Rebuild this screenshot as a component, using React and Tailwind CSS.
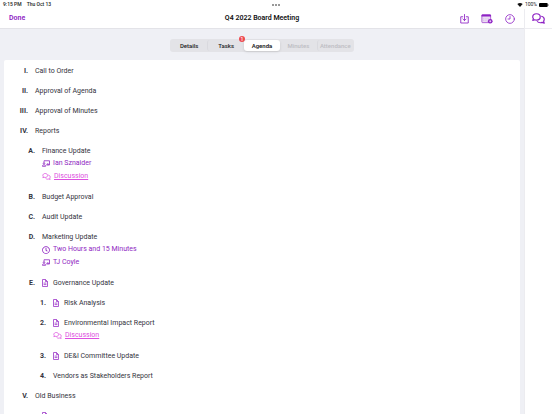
import React from "react";
import { FaRegClock } from "react-icons/fa";

function PresenterIcon({ className }) {
  return (
    <svg viewBox="0 0 20 16" className={className} fill="none" stroke="currentColor" strokeWidth="2" aria-hidden="true">
      <path d="M5 4V1.200h13.800v10.600H11" />
      <path d="M12.500 11.500V9h3.500v2.500" />
      <circle cx="5" cy="7.600" r="2" />
      <path d="M1 15c0-2.600 1.400-3.600 4-3.600s4 1 4 3.600z" />
    </svg>
  );
}

function FileIcon({ className }) {
  return (
    <svg viewBox="0 0 12 16" className={className} fill="none" stroke="currentColor" strokeWidth="1.600" strokeLinejoin="round" aria-hidden="true">
      <path d="M1 1h6l4 4v10H1z" />
      <path d="M7 1v4h4M3.200 8.200h5.600M3.200 11.200h5.600" />
    </svg>
  );
}

function DownloadIcon() {
  return (
    <svg viewBox="0 0 18 20" className="h-[10px] w-[9px]" fill="none" stroke="currentColor" strokeWidth="1.700" strokeLinecap="round" strokeLinejoin="round" aria-hidden="true">
      <path d="M5.500 5.500H1.500v12.500h15V5.500h-4" />
      <path d="M9 1v12M5.800 10l3.200 3.200 3.200-3.200" />
    </svg>
  );
}

function CalendarIcon() {
  return (
    <svg viewBox="0 0 24 20" className="h-[10px] w-3" aria-hidden="true">
      <rect x="1.700" y="1.700" width="17.600" height="15.600" rx="1.500" fill="#eadcf3" stroke="currentColor" strokeWidth="1.300" />
      <path d="M1 2.500A1.500 1.500 0 0 1 2.500 1h16A1.500 1.500 0 0 1 20 2.500V5H1z" fill="currentColor" />
      <path d="M4 9.500h13M4 13h9" stroke="currentColor" strokeWidth="1" strokeDasharray="2 1.500" opacity=".25" />
      <circle cx="18.500" cy="14.500" r="4.700" fill="currentColor" />
      <path d="M18.500 12.500v4M16.500 14.500h4" stroke="#fff" strokeWidth="1.300" />
    </svg>
  );
}

function HistoryIcon() {
  return (
    <svg viewBox="0 0 20 20" className="size-[10px]" fill="none" stroke="currentColor" strokeWidth="1.600" strokeLinecap="round" aria-hidden="true">
      <circle cx="10" cy="10" r="8.700" />
      <path d="M10 5V10H6" />
    </svg>
  );
}

function ChatsIcon({ className }) {
  return (
    <svg viewBox="0 0 26 22" className={className} fill="none" stroke="currentColor" strokeWidth="2.400" strokeLinejoin="round" aria-hidden="true">
      <path d="M9 1.500c4.300 0 7.500 2.700 7.500 6.300s-3.200 6.300-7.500 6.300c-1.300 0-2.500-.2-3.500-.7l-4 1.300 1.300-3.500C2 10.300 1.500 9.100 1.500 7.800c0-3.600 3.200-6.300 7.500-6.300z" />
      <path d="M18.500 6.500c3.500.6 6 2.900 6 6 0 1.500-.5 2.700-1.300 3.800l1.300 4-4.200-1.500c-1 .4-2.200.7-3.500.7-2.900 0-5.300-1.200-6.600-3" />
    </svg>
  );
}

const AGENDA = [
  { label: "I.", title: "Call to Order" },
  { label: "II.", title: "Approval of Agenda" },
  { label: "III.", title: "Approval of Minutes" },
  {
    label: "IV.",
    title: "Reports",
    items: [
      { label: "A.", title: "Finance Update", presenter: "Ian Sznaider", discussion: true },
      { label: "B.", title: "Budget Approval" },
      { label: "C.", title: "Audit Update" },
      { label: "D.", title: "Marketing Update", duration: "Two Hours and 15 Minutes", presenter: "TJ Coyle" },
      {
        label: "E.",
        title: "Governance Update",
        file: true,
        items: [
          { label: "1.", title: "Risk Analysis", file: true },
          { label: "2.", title: "Environmental Impact Report", file: true, discussion: true },
          { label: "3.", title: "DE&I Committee Update", file: true },
          { label: "4.", title: "Vendors as Stakeholders Report" },
        ],
      },
    ],
  },
  { label: "V.", title: "Old Business", items: [{ label: "", title: "", file: true }] },
];

const LABEL_WIDTHS = ["w-6", "w-[31px]", "w-[42px]"];

function Detail({ icon, children }) {
  return (
    <div className="flex h-[13px] items-center leading-[13px] text-[#8f27c2]">
      <span className="flex w-[11px] shrink-0">{icon}</span>
      {children}
    </div>
  );
}

function AgendaItem({ item, depth }) {
  return (
    <li className="flex flex-col gap-2">
      <div className="flex gap-[7px]">
        <span className={`shrink-0 text-right font-bold leading-3 ${LABEL_WIDTHS[depth]}`}>{item.label}</span>
        <div className="min-w-0 flex-1">
          <div className="flex h-3 items-center">
            {item.file && (
              <span className="flex w-[11px] shrink-0">
                <FileIcon className="h-2 w-[6px] text-[#9a35c8]" />
              </span>
            )}
            <span className="leading-3">{item.title}</span>
          </div>
          {item.duration && (
            <Detail icon={<FaRegClock className="size-2" aria-hidden="true" />}>{item.duration}</Detail>
          )}
          {item.presenter && (
            <Detail icon={<PresenterIcon className="h-[7px] w-2" />}>{item.presenter}</Detail>
          )}
          {item.discussion && (
            <a href="#discussion" className="flex h-[13px] items-center leading-[13px] text-[#dd4fe0]">
              <span className="flex w-3 shrink-0">
                <ChatsIcon className="h-[7px] w-[9px]" />
              </span>
              <span className="underline underline-offset-1">Discussion</span>
            </a>
          )}
        </div>
      </div>
      {item.items && <AgendaList items={item.items} depth={depth + 1} />}
    </li>
  );
}

function AgendaList({ items, depth = 0 }) {
  return (
    <ol className="flex flex-col gap-2">
      {items.map((item, i) => (
        <AgendaItem key={i} item={item} depth={depth} />
      ))}
    </ol>
  );
}

function StatusBar() {
  return (
    <div className="grid h-[9px] grid-cols-3 items-center px-[3px] text-[5px] leading-none text-[#222]">
      <div className="flex gap-[5px] font-medium">
        <span>9:15 PM</span>
        <span>Thu Oct 13</span>
      </div>
      <div className="flex justify-center gap-px">
        <span className="size-[2px] rounded-full bg-[#777]" />
        <span className="size-[2px] rounded-full bg-[#777]" />
        <span className="size-[2px] rounded-full bg-[#777]" />
      </div>
      <div className="flex items-center justify-end gap-[2px]">
        <svg viewBox="0 0 12 9" className="h-1 w-[6px]" aria-hidden="true">
          <path d="M6 9 0 2.500C3.500-.6 8.500-.6 12 2.500z" fill="#111" />
        </svg>
        <span>100%</span>
        <svg viewBox="0 0 20 8" className="h-1 w-[10px]" aria-hidden="true">
          <rect width="17.500" height="8" rx="2" fill="#000" />
          <rect x="18.500" y="2.500" width="1.500" height="3" rx=".7" fill="#777" />
        </svg>
      </div>
    </div>
  );
}

function Tabs() {
  const tab = "relative h-[11px] rounded-[3px] text-center";
  return (
    <nav className="mx-auto grid w-[184px] grid-cols-5 rounded-[3px] bg-[#e3e3e7] p-px text-[6px] font-medium leading-[11px] text-[#222]">
      <button type="button" className={tab}>Details</button>
      <button type="button" className={`${tab} border-l border-[#d9d9de]`}>
        Tasks
        <span className="absolute -top-1 -right-px flex size-[6px] items-center justify-center rounded-full bg-[#ee4a4f] text-[5px] leading-none text-white">1</span>
      </button>
      <button type="button" className={`${tab} bg-white font-semibold shadow-sm`}>Agenda</button>
      <button type="button" disabled className={`${tab} text-[#bdbdc3]`}>Minutes</button>
      <button type="button" disabled className={`${tab} border-l border-[#d9d9de] text-[#bdbdc3]`}>Attendance</button>
    </nav>
  );
}

export default function App() {
  return (
    <div className="flex h-screen flex-col overflow-hidden bg-white font-[Roboto,sans-serif] text-[7px] text-[#33333d]">
      <StatusBar />
      <div className="flex min-h-0 flex-1">
        <div className="flex min-w-0 flex-1 flex-col">
          <header className="grid h-5 shrink-0 grid-cols-[1fr_auto_1fr] items-center border-b border-[#e3e3e8] pr-[9px] pl-[9px] leading-[13px]">
            <button type="button" className="justify-self-start font-semibold text-[#8e22c4]">Done</button>
            <h1 className="font-semibold text-[#111]">Q4 2022 Board Meeting</h1>
            <div className="flex items-center justify-end gap-3 text-[#8e22c4]">
              <button type="button" aria-label="Download"><DownloadIcon /></button>
              <button type="button" aria-label="Add to calendar"><CalendarIcon /></button>
              <button type="button" aria-label="History"><HistoryIcon /></button>
            </div>
          </header>
          <main className="flex min-h-0 flex-1 flex-col bg-[#eff0f5] px-1 pt-[10px]">
            <Tabs />
            <section className="mt-2 min-h-0 flex-1 overflow-hidden rounded-t-[2px] bg-white pt-[5px]">
              <AgendaList items={AGENDA} />
            </section>
          </main>
        </div>
        <aside className="w-7 shrink-0 border-l border-[#ececf0]">
          <div className="flex h-5 items-center justify-center border-b border-[#ececf0] text-[#8e22c4]">
            <button type="button" aria-label="Discussions"><ChatsIcon className="h-[11px] w-[13px]" /></button>
          </div>
        </aside>
      </div>
    </div>
  );
}
